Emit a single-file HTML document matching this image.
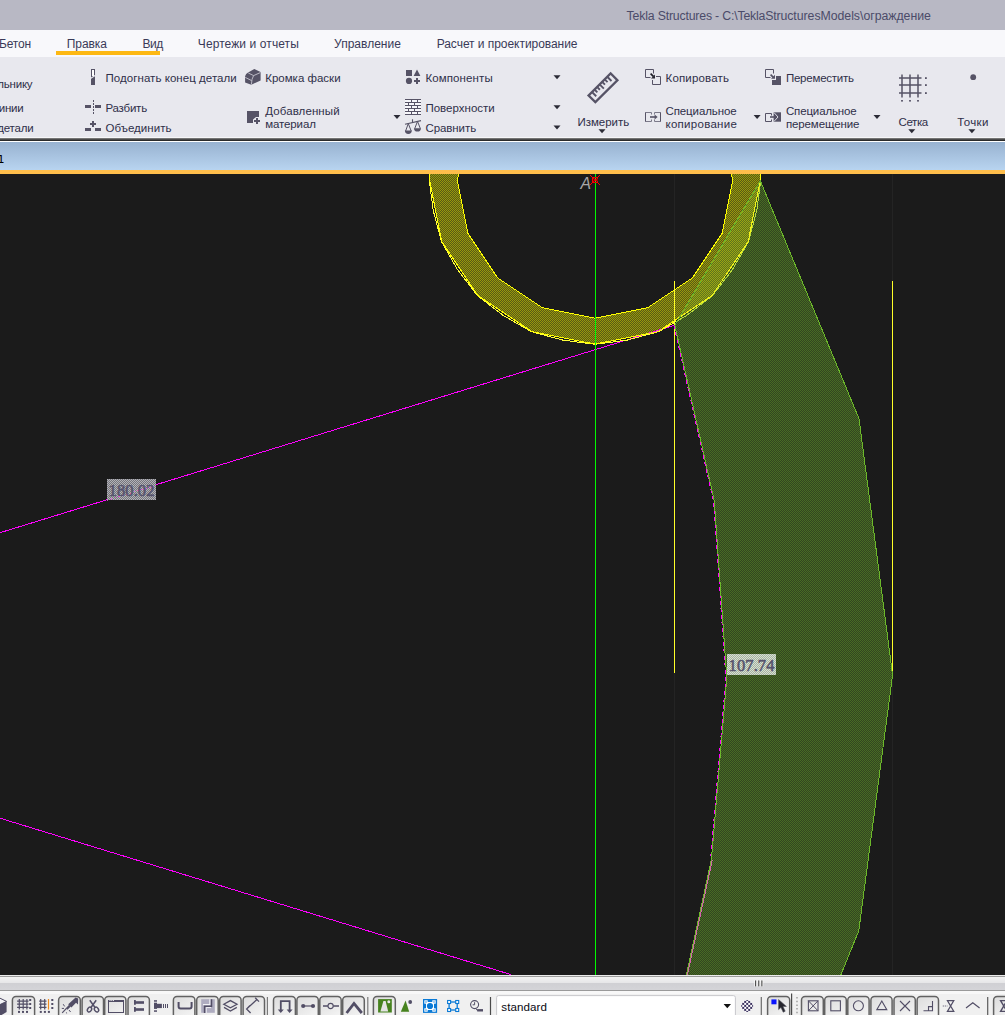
<!DOCTYPE html>
<html><head><meta charset="utf-8">
<style>
*{box-sizing:border-box;margin:0;padding:0}
html,body{width:1005px;height:1015px;overflow:hidden;background:#1b1b1b}
body{position:relative;font-family:"Liberation Sans",sans-serif;font-size:11.5px;color:#2f2f49}
.abs{position:absolute}
#title{left:0;top:0;width:1005px;height:30px;background:#b8b8c4}
#tabs{left:0;top:30px;width:1005px;height:27px;background:#f8f8fb}
#ribbon{left:0;top:57px;width:1005px;height:80px;background:#e8e8ee}
#sep1{left:0;top:137px;width:1005px;height:5px;background:linear-gradient(#f6f6f8 0,#f6f6f8 1px,#909090 1px,#5a5a5a 2px,#2a2a2a 3.5px,#2a2a2a 4px,#fff 4px,#fff 5px)}
#blue{left:0;top:142px;width:1005px;height:28px;background:linear-gradient(#98b2d0,#b8d4f0)}
#orange{left:0;top:170px;width:1005px;height:4px;background:#ffbe4b}
#canvas{left:0;top:174px;width:1005px;height:801px;background:#1b1b1b}
#sb{left:0;top:975px;width:1005px;height:16px;background:linear-gradient(#ececec 0,#ececec 6.25%,#9c9c9c 6.25%,#9c9c9c 12.5%,#f2f2f2 12.5%,#e6e6e8 50%,#d0d0d4 53%,#d4d4d8 93.75%,#9a9a9a 93.75%,#9a9a9a 100%)}
#tb{left:0;top:991px;width:1005px;height:24px;background:linear-gradient(#f8f8f8 0,#f8f8f8 2.5px,#f0f0f0 2.5px,#f0f0f0 100%)}
.t{position:absolute;white-space:nowrap;line-height:14px;height:14px}
</style></head><body>
<div id="title" class="abs"></div>
<div id="tabs" class="abs"></div>
<div id="ribbon" class="abs"></div>
<div id="sep1" class="abs"></div>
<div id="blue" class="abs"></div>
<div id="orange" class="abs"></div>
<div id="canvas" class="abs"></div>
<!--CANVAS-->
<svg class="abs" style="left:0;top:174px" width="1005" height="801" viewBox="0 174 1005 801" shape-rendering="crispEdges">
<defs>
<pattern id="py" width="2" height="2" patternUnits="userSpaceOnUse"><rect width="2" height="2" fill="#585a16"/><rect width="1" height="1" fill="#98980c"/><rect x="1" y="1" width="1" height="1" fill="#98980c"/></pattern>
<pattern id="pg" width="2" height="2" patternUnits="userSpaceOnUse"><rect width="2" height="2" fill="#324620"/><rect width="1" height="1" fill="#486a24"/><rect x="1" y="1" width="1" height="1" fill="#486a24"/></pattern>
<pattern id="po" width="2" height="2" patternUnits="userSpaceOnUse"><rect width="2" height="2" fill="#5c731e"/><rect width="1" height="1" fill="#9ba512"/><rect x="1" y="1" width="1" height="1" fill="#9ba512"/></pattern>
<pattern id="pl1" width="2" height="2" patternUnits="userSpaceOnUse"><rect width="2" height="2" fill="#76767c"/><rect width="1" height="1" fill="#b2b2b8"/><rect x="1" y="1" width="1" height="1" fill="#b2b2b8"/></pattern>
<pattern id="pl2" width="2" height="2" patternUnits="userSpaceOnUse"><rect width="2" height="2" fill="#a4b49e"/><rect width="1" height="1" fill="#d8ddd4"/><rect x="1" y="1" width="1" height="1" fill="#d8ddd4"/></pattern>
<clipPath id="cring"><path clip-rule="evenodd" d="M595.0,344.1 L531.6,331.5 L477.8,295.5 L441.8,241.7 L429.2,178.3 L441.8,114.9 L477.8,61.1 L531.6,25.1 L595.0,12.5 L658.4,25.1 L712.2,61.1 L748.2,114.9 L760.8,178.3 L748.2,241.7 L712.2,295.5 L658.4,331.5Z M595.0,318.2 L542.3,307.7 L497.6,277.9 L467.8,233.2 L457.3,180.5 L467.8,127.8 L497.6,83.1 L542.3,53.3 L595.0,42.8 L647.7,53.3 L692.4,83.1 L722.2,127.8 L732.7,180.5 L722.2,233.2 L692.4,277.9 L647.7,307.7Z"/></clipPath>
<clipPath id="cgreen"><path d="M760.3,180.8 L859.0,418.7 L892.6,675.0 L858.8,930.7 L840.4,976.0 L686.1,976.0 L711.4,859.6 L726.8,678.0 L714.3,501.0 L674.8,325.2Z"/></clipPath>
</defs>
<rect x="0" y="174" width="1005" height="801" fill="#1b1b1b"/>
<path d="M674.5,174 V281 M892.5,174 V281 M892.5,673 V975 M674.5,673 V975" stroke="#242424" stroke-width="1"/>
<path fill-rule="evenodd" d="M595.0,344.1 L531.6,331.5 L477.8,295.5 L441.8,241.7 L429.2,178.3 L441.8,114.9 L477.8,61.1 L531.6,25.1 L595.0,12.5 L658.4,25.1 L712.2,61.1 L748.2,114.9 L760.8,178.3 L748.2,241.7 L712.2,295.5 L658.4,331.5Z M595.0,318.2 L542.3,307.7 L497.6,277.9 L467.8,233.2 L457.3,180.5 L467.8,127.8 L497.6,83.1 L542.3,53.3 L595.0,42.8 L647.7,53.3 L692.4,83.1 L722.2,127.8 L732.7,180.5 L722.2,233.2 L692.4,277.9 L647.7,307.7Z" fill="url(#py)"/>
<path d="M-2,533.3 L674.8,325.2" fill="none" stroke="#ff00ff" stroke-width="1"/>
<path d="M760.3,180.8 L859.0,418.7 L892.6,675.0 L858.8,930.7 L840.4,976.0 L686.1,976.0 L711.4,859.6 L726.8,678.0 L714.3,501.0 L674.8,325.2Z" fill="url(#pg)"/>
<path d="M760.3,180.8 L859.0,418.7 L892.6,675.0 L858.8,930.7 L840.4,976.0 L686.1,976.0 L711.4,859.6 L726.8,678.0 L714.3,501.0 L674.8,325.2Z" fill="url(#po)" clip-path="url(#cring)"/>
<path d="M595.0,344.3 L562.8,340.1 L531.5,331.7 L503.3,315.5 L477.6,295.7 L457.8,270.0 L441.6,241.8 L433.2,210.5 L429.0,178.3 L433.2,146.1 L441.6,114.8 L457.8,86.6 L477.6,60.9 L503.3,41.1 L531.5,24.9 L562.8,16.5 L595.0,12.3 L627.2,16.5 L658.5,24.9 L686.7,41.1 L712.4,60.9 L732.2,86.6 L748.4,114.8 L756.8,146.1 L761.0,178.3 L756.8,210.5 L748.4,241.8 L732.2,270.0 L712.4,295.7 L686.7,315.5 L658.5,331.7 L627.2,340.1Z" fill="none" stroke="#ffff38" stroke-width="1"/>
<path d="M595.0,344.1 L531.6,331.5 L477.8,295.5 L441.8,241.7 L429.2,178.3 L441.8,114.9 L477.8,61.1 L531.6,25.1 L595.0,12.5 L658.4,25.1 L712.2,61.1 L748.2,114.9 L760.8,178.3 L748.2,241.7 L712.2,295.5 L658.4,331.5Z M595.0,318.2 L542.3,307.7 L497.6,277.9 L467.8,233.2 L457.3,180.5 L467.8,127.8 L497.6,83.1 L542.3,53.3 L595.0,42.8 L647.7,53.3 L692.4,83.1 L722.2,127.8 L732.7,180.5 L722.2,233.2 L692.4,277.9 L647.7,307.7Z" fill="none" stroke="#ffff00" stroke-width="1"/>
<g clip-path="url(#cgreen)"><path d="M595.0,344.3 L562.8,340.1 L531.5,331.7 L503.3,315.5 L477.6,295.7 L457.8,270.0 L441.6,241.8 L433.2,210.5 L429.0,178.3 L433.2,146.1 L441.6,114.8 L457.8,86.6 L477.6,60.9 L503.3,41.1 L531.5,24.9 L562.8,16.5 L595.0,12.3 L627.2,16.5 L658.5,24.9 L686.7,41.1 L712.4,60.9 L732.2,86.6 L748.4,114.8 L756.8,146.1 L761.0,178.3 L756.8,210.5 L748.4,241.8 L732.2,270.0 L712.4,295.7 L686.7,315.5 L658.5,331.7 L627.2,340.1Z" fill="none" stroke="#b8dc3a" stroke-width="1"/><path d="M595.0,344.1 L531.6,331.5 L477.8,295.5 L441.8,241.7 L429.2,178.3 L441.8,114.9 L477.8,61.1 L531.6,25.1 L595.0,12.5 L658.4,25.1 L712.2,61.1 L748.2,114.9 L760.8,178.3 L748.2,241.7 L712.2,295.5 L658.4,331.5Z M595.0,318.2 L542.3,307.7 L497.6,277.9 L467.8,233.2 L457.3,180.5 L467.8,127.8 L497.6,83.1 L542.3,53.3 L595.0,42.8 L647.7,53.3 L692.4,83.1 L722.2,127.8 L732.7,180.5 L722.2,233.2 L692.4,277.9 L647.7,307.7Z" fill="none" stroke="#f4f418" stroke-width="1"/></g>
<g clip-path="url(#cring)"><path d="M595,350.2 L674.8,325.6" fill="none" stroke="#ff70c8" stroke-width="1" stroke-dasharray="2 2"/></g>
<path d="M674.5,281 V673 M892.5,281 V673" stroke="#ffff28" stroke-width="1"/>
<path d="M673.9,325.2 L713.4,501 L725.9,678 L710.8,857" fill="none" stroke="#ff00ff" stroke-width="1" stroke-dasharray="4 3"/>
<path d="M712.4,859.6 L687.1,976" fill="none" stroke="#d860b0" stroke-width="1"/>
<path d="M760.3,180.8 L859.0,418.7 L892.6,675.0 L858.8,930.7 L840.4,976.0 L686.1,976.0 L711.4,859.6 L726.8,678.0 L714.3,501.0 L674.8,325.2Z" fill="none" stroke="#6cb82a" stroke-width="1"/>
<path d="M-2,817.6 L511,974.6" fill="none" stroke="#ff00ff" stroke-width="1"/>
<path d="M595.5,174 V975" stroke="#00f800" stroke-width="1"/>
<rect x="592" y="177" width="6" height="6" fill="#ff0000"/>
<path d="M590,175 L600,185 M600,175 L590,185" stroke="#ff0000" stroke-width="1"/>
<circle cx="595.5" cy="180" r="1.9" fill="none" stroke="#3a0a0a" stroke-width="0.9" shape-rendering="auto"/><rect x="595" y="178" width="1" height="1" fill="#30e030"/><rect x="595" y="181" width="1" height="1" fill="#30e030"/>
<text x="580.6" y="189.2" textLength="10.5" lengthAdjust="spacingAndGlyphs" font-family="Liberation Sans, sans-serif" font-style="italic" font-size="16.8" fill="#a8a8a8" shape-rendering="auto">A</text>
<rect x="107" y="479" width="49" height="21" fill="url(#pl1)"/>
<path d="M107,500.4 L156,485.3" stroke="#f050e8" stroke-width="1" stroke-dasharray="1.5 2.5" opacity="0.8"/>
<text x="131.6" y="496" text-anchor="middle" font-family="Liberation Serif, serif" font-size="16.5" letter-spacing="0.1" fill="#55526c" stroke="#55526c" stroke-width="0.55" shape-rendering="auto">180.02</text>
<rect x="727" y="654" width="49" height="21" fill="url(#pl2)"/>
<text x="751.6" y="671" text-anchor="middle" font-family="Liberation Serif, serif" font-size="16.5" letter-spacing="0.1" fill="#55526c" stroke="#55526c" stroke-width="0.55" shape-rendering="auto">107.74</text>
</svg>
<!--/CANVAS-->
<div id="sb" class="abs"></div>
<div id="tb" class="abs"></div>
<svg id="grip" class="abs" style="left:750px;top:977px" width="20" height="12" viewBox="750 977 20 12"><path d="M755.7,980 V986.6 M758.8,980 V986.6 M761.9,980 V986.6" stroke="#fff" stroke-width="2.6"/><path d="M755.7,980.4 V986.4 M758.8,980.4 V986.4 M761.9,980.4 V986.4" stroke="#2a2a2a" stroke-width="1"/></svg>
<!--RIBICONS-->
<svg class="abs" style="left:0;top:57px" width="1005" height="80" viewBox="0 57 1005 80">
<path d="M553.5,75.2 h7 l-3.5,4z" fill="#2b2b36"/>
<path d="M553.5,105.2 h7 l-3.5,4z" fill="#2b2b36"/>
<path d="M553.5,125.5 h7 l-3.5,4z" fill="#2b2b36"/>
<path d="M393.5,115 h7 l-3.5,4z" fill="#2b2b36"/>
<path d="M753.6,115 h7 l-3.5,4z" fill="#2b2b36"/>
<path d="M873.5,115 h7 l-3.5,4z" fill="#2b2b36"/>
<path d="M598.5,129.3 h7 l-3.5,4z" fill="#2b2b36"/>
<path d="M908.3,129.3 h7 l-3.5,4z" fill="#2b2b36"/>
<path d="M968.4,129.3 h7 l-3.5,4z" fill="#2b2b36"/>
<rect x="91.5" y="69.5" width="3" height="7" fill="#fff" stroke="#565366" stroke-width="1"/><rect x="91" y="77" width="4" height="8" fill="#565366"/><path d="M90.5,78.5 L95.5,75.2" stroke="#e8e8ee" stroke-width="1.1"/>
<rect x="85" y="105" width="6" height="3" fill="#565366"/><rect x="95" y="105" width="6" height="3" fill="#565366"/><path d="M93.5,100 V114" stroke="#565366" stroke-width="1" stroke-dasharray="2 1"/>
<rect x="85" y="128" width="6" height="3" fill="#565366"/><rect x="95" y="128" width="6" height="3" fill="#565366"/><rect x="90" y="123" width="6" height="2" fill="#565366"/><rect x="92" y="121" width="2" height="6" fill="#565366"/>
<path d="M254.3,69 L260.6,72.1 L260.6,80.5 L251.3,84.7 L245.1,82.6 L245.1,76.3 Q245.6,73.6 248.1,72.4 Z" fill="#565366"/><path d="M248.3,73 L253.6,75.6 L260.3,72.6 M253.6,75.6 Q251.6,78.5 251.4,84.5 M245.3,77.4 L251.6,80.6" fill="none" stroke="#d4d3dc" stroke-width="0.8"/>
<path d="M247,111 H259 V117 H256 L253,119.5 V123 H247Z" fill="#565366"/><rect x="254" y="120" width="6" height="2" fill="#565366"/><rect x="256" y="118" width="2" height="6" fill="#565366"/>
<rect x="406" y="70" width="6" height="6" fill="#565366"/><path d="M417,69.6 L420.4,76 H413.6Z" fill="#565366"/><circle cx="409" cy="80.9" r="3.1" fill="#565366"/><rect x="414" y="80" width="6" height="2" fill="#565366"/><rect x="416" y="78" width="2" height="6" fill="#565366"/>
<rect x="405" y="99" width="16" height="16" fill="#f6f6fa"/><path d="M405,99.5 H421 M405,102.5 H421 M405,105.5 H421 M405,108.5 H421 M405,111.5 H421 M405,114.5 H421 M411.5,99.5 v3 M417.5,99.5 v3 M411.5,105.5 v3 M417.5,105.5 v3 M411.5,111.5 v3 M417.5,111.5 v3 M408.5,102.5 v3 M414.5,102.5 v3 M408.5,108.5 v3 M414.5,108.5 v3 " stroke="#565366" stroke-width="1" fill="none"/>
<path d="M405,124.3 L421,120.6 M412.5,119.2 V122.6" stroke="#565366" stroke-width="1.1" fill="none"/><path d="M408.3,123.6 L405.6,131 M408.3,123.6 L411.2,131 M417.5,121.4 L414.7,128.6 M417.5,121.4 L420.4,128.6" stroke="#565366" stroke-width="1" fill="none"/><path d="M404.9,130.6 H411.8 A3.45,3.4 0 0 1 404.9,130.6Z M414,128.2 H420.9 A3.45,3.4 0 0 1 414,128.2Z" fill="#565366"/>
<g transform="translate(603,87.8) rotate(-45)"><rect x="-15.6" y="-4.8" width="31.2" height="9.6" fill="none" stroke="#565366" stroke-width="2.3"/><path d="M-10.8,-4.8 V1.2" stroke="#565366" stroke-width="1.9"/><path d="M-7.2,-4.8 V-0.8" stroke="#565366" stroke-width="1.9"/><path d="M-3.6,-4.8 V-0.8" stroke="#565366" stroke-width="1.9"/><path d="M0.0,-4.8 V1.2" stroke="#565366" stroke-width="1.9"/><path d="M3.6,-4.8 V-0.8" stroke="#565366" stroke-width="1.9"/><path d="M7.2,-4.8 V-0.8" stroke="#565366" stroke-width="1.9"/><path d="M10.8,-4.8 V1.2" stroke="#565366" stroke-width="1.9"/></g>
<path d="M650.5,77.5 H645.5 V69.5 H653.5 V73.5 M652.5,80 V84.5 H660.5 V76.5 H656" fill="none" stroke="#565366" stroke-width="1"/><path d="M650.6,73.6 L653.6,76.6" stroke="#1d1d26" stroke-width="1.6"/><path d="M655,78.6 V74.6 L651,78.6Z" fill="#2a2a34"/>
<path d="M770.5,77.5 H765.5 V69.5 H773.5 V73.5" fill="none" stroke="#565366" stroke-width="1"/><path d="M776,76 H781 V85 H772 V80 H776Z" fill="#565366"/><path d="M770.6,74.6 L773.6,77.6" stroke="#565366" stroke-width="1.6"/><path d="M775,78.8 V74.8 L771,78.8Z" fill="#565366"/>
<path d="M651.5,114.5 V112.5 H645.5 V121.5 H651.5 V119.5 M654.5,114.5 V112.5 H660.5 V121.5 H654.5 V119.5" fill="none" stroke="#7c7a8a" stroke-width="1"/><path d="M645.5,112.5 V121.5 M660.5,112.5 V121.5" stroke="#565366" stroke-width="1"/><path d="M650,117 H655" stroke="#565366" stroke-width="1.6"/><path d="M654.6,114.4 L657.6,117 L654.6,119.6Z" fill="#565366"/>
<path d="M771.5,115.5 V113.5 H765.5 V121.5 H771.5 V119.5" fill="none" stroke="#565366" stroke-width="1"/><rect x="773.6" y="112.3" width="7.4" height="9.4" fill="#565366"/><path d="M774,112.6 L778,117 L774,121.4" fill="none" stroke="#dcdce4" stroke-width="1"/><path d="M770,117 H775" stroke="#565366" stroke-width="1.6"/><path d="M774,114 L777,117 L774,120Z" fill="#565366"/>
<path d="M902,74.5 V97.5 M910,74.5 V97.5 M918,74.5 V97.5 M899,78 H921.5 M899,85 H921.5 M899,93 H921.5" stroke="#565366" stroke-width="1.5" fill="none"/><rect x="925" y="77.2" width="1.8" height="1.8" fill="#565366"/><rect x="925" y="84.2" width="1.8" height="1.8" fill="#565366"/><rect x="925" y="92.2" width="1.8" height="1.8" fill="#565366"/><rect x="901.1" y="100" width="1.8" height="1.6" fill="#565366"/><rect x="909.1" y="100" width="1.8" height="1.6" fill="#565366"/><rect x="917.1" y="100" width="1.8" height="1.6" fill="#565366"/>
<circle cx="973.2" cy="77.2" r="2.9" fill="#565366"/>
</svg>
<!--/RIBICONS-->
<div id="ul" class="abs" style="left:56px;top:51px;width:104px;height:4px;background:#fdb813"></div>
<div id="v1" class="abs" style="right:1000.4px;top:153px;font-family:'DejaVu Sans',sans-serif;font-size:11px;line-height:14px;color:#000;white-space:nowrap">View 1</div>
<!--TEXT-->
<div class="t" style="left:626.6px;top:8.74px;letter-spacing:-0.181px;font-size:12.3px;color:#4b4b69">Tekla Structures - C:\TeklaStr</div>
<div class="t" style="left:780.4px;top:8.74px;letter-spacing:-0.028px;font-size:12.3px;color:#4b4b69">ucturesModels\</div>
<div class="t" style="left:863.4px;top:8.74px;letter-spacing:-0.035px;font-size:12.3px;color:#4b4b69">ограждение</div>
<div class="t" style="left:-1.0px;top:36.84px;letter-spacing:-0.202px;font-size:12px;color:#3a3a58">Бетон</div>
<div class="t" style="left:66.7px;top:36.84px;letter-spacing:-0.041px;font-size:12px;color:#3a3a58">Правка</div>
<div class="t" style="left:142.5px;top:36.84px;letter-spacing:-0.473px;font-size:12px;color:#3a3a58">Вид</div>
<div class="t" style="left:197.8px;top:36.84px;letter-spacing:0.091px;font-size:12px;color:#3a3a58">Чертежи и отчеты</div>
<div class="t" style="left:334.1px;top:36.84px;letter-spacing:0.008px;font-size:12px;color:#3a3a58">Управление</div>
<div class="t" style="left:436.7px;top:36.84px;letter-spacing:-0.049px;font-size:12px;color:#3a3a58">Расчет и проектирование</div>
<div class="t" style="left:105.5px;top:71.02px;letter-spacing:0.053px">Подогнать конец детали</div>
<div class="t" style="left:265.2px;top:71.02px;letter-spacing:0.005px">Кромка фаски</div>
<div class="t" style="left:425.4px;top:71.02px;letter-spacing:0.113px">Компоненты</div>
<div class="t" style="left:665.5px;top:71.02px;letter-spacing:0.178px">Копировать</div>
<div class="t" style="left:785.9px;top:71.02px;letter-spacing:-0.224px">Переместить</div>
<div class="t" style="left:105.5px;top:101.02px;letter-spacing:-0.224px">Разбить</div>
<div class="t" style="left:425.4px;top:101.02px;letter-spacing:0.014px">Поверхности</div>
<div class="t" style="left:105.5px;top:121.02px;letter-spacing:0.034px">Объединить</div>
<div class="t" style="left:425.4px;top:121.02px;letter-spacing:-0.069px">Сравнить</div>
<div class="t" style="left:265.2px;top:104.02px;letter-spacing:0.102px">Добавленный</div>
<div class="t" style="left:265.2px;top:117.02px;letter-spacing:-0.114px">материал</div>
<div class="t" style="left:665.5px;top:104.02px;letter-spacing:-0.108px">Специальное</div>
<div class="t" style="left:665.5px;top:117.02px;letter-spacing:0.278px">копирование</div>
<div class="t" style="left:785.9px;top:104.02px;letter-spacing:-0.135px">Специальное</div>
<div class="t" style="left:785.9px;top:117.02px;letter-spacing:-0.111px">перемещение</div>
<div class="t" style="left:577.5px;top:115.02px;letter-spacing:-0.040px">Измерить</div>
<div class="t" style="left:898.5px;top:115.02px;letter-spacing:-0.393px">Сетка</div>
<div class="t" style="left:957.2px;top:115.02px;letter-spacing:0.356px">Точки</div>
<div class="t" style="right:972.6px;top:77.02px;letter-spacing:-0.2px">прямоугольнику</div>
<div class="t" style="right:981.5px;top:101.02px;letter-spacing:-0.2px">линии</div>
<div class="t" style="right:971.6px;top:121.02px;letter-spacing:-0.2px">детали</div>
<!--/TEXT-->
<!--TB-->
<svg class="abs" style="left:0;top:991px" width="1005" height="24" viewBox="0 991 1005 24">
<defs><linearGradient id="bg" x1="0" y1="0" x2="0.6" y2="1"><stop offset="0" stop-color="#dcdcdc"/><stop offset="1" stop-color="#f4f4f4"/></linearGradient>
<pattern id="ck" x="0.2" y="0.9" width="4" height="4" patternUnits="userSpaceOnUse"><rect width="4" height="4" fill="#fff"/><rect width="2" height="2" fill="#3c3260"/><rect x="2" y="2" width="2" height="2" fill="#3c3260"/></pattern></defs>
<rect x="12.4" y="996.6" width="22.2" height="24" rx="3.6" fill="url(#bg)" stroke="#626262" stroke-width="1.5"/>
<rect x="58.6" y="996.6" width="21.7" height="24" rx="3.6" fill="url(#bg)" stroke="#626262" stroke-width="1.5"/>
<rect x="82.1" y="996.6" width="21.4" height="24" rx="3.6" fill="url(#bg)" stroke="#626262" stroke-width="1.5"/>
<rect x="104.7" y="996.6" width="21.2" height="24" rx="3.6" fill="url(#bg)" stroke="#626262" stroke-width="1.5"/>
<rect x="128.0" y="996.6" width="21.4" height="24" rx="3.6" fill="url(#bg)" stroke="#626262" stroke-width="1.5"/>
<rect x="173.4" y="996.6" width="21.5" height="24" rx="3.6" fill="url(#bg)" stroke="#626262" stroke-width="1.5"/>
<rect x="196.7" y="996.6" width="21.5" height="24" rx="3.6" fill="url(#bg)" stroke="#626262" stroke-width="1.5"/>
<rect x="219.7" y="996.6" width="21.4" height="24" rx="3.6" fill="url(#bg)" stroke="#626262" stroke-width="1.5"/>
<rect x="243.1" y="996.6" width="21.4" height="24" rx="3.6" fill="url(#bg)" stroke="#626262" stroke-width="1.5"/>
<rect x="273.5" y="996.6" width="21.9" height="24" rx="3.6" fill="url(#bg)" stroke="#626262" stroke-width="1.5"/>
<rect x="296.9" y="996.6" width="21.4" height="24" rx="3.6" fill="url(#bg)" stroke="#626262" stroke-width="1.5"/>
<rect x="319.8" y="996.6" width="21.4" height="24" rx="3.6" fill="url(#bg)" stroke="#626262" stroke-width="1.5"/>
<rect x="342.7" y="996.6" width="21.6" height="24" rx="3.6" fill="url(#bg)" stroke="#626262" stroke-width="1.5"/>
<rect x="373.4" y="996.6" width="21.9" height="24" rx="3.6" fill="url(#bg)" stroke="#626262" stroke-width="1.5"/>
<rect x="767.6" y="996.6" width="22.1" height="24" rx="3.6" fill="url(#bg)" stroke="#626262" stroke-width="1.5"/>
<rect x="801.5" y="996.6" width="21.8" height="24" rx="3.6" fill="url(#bg)" stroke="#626262" stroke-width="1.5"/>
<rect x="824.7" y="996.6" width="21.6" height="24" rx="3.6" fill="url(#bg)" stroke="#626262" stroke-width="1.5"/>
<rect x="847.8" y="996.6" width="21.3" height="24" rx="3.6" fill="url(#bg)" stroke="#626262" stroke-width="1.5"/>
<rect x="870.9" y="996.6" width="21.2" height="24" rx="3.6" fill="url(#bg)" stroke="#626262" stroke-width="1.5"/>
<rect x="894.0" y="996.6" width="21.3" height="24" rx="3.6" fill="url(#bg)" stroke="#626262" stroke-width="1.5"/>
<rect x="917.1" y="996.6" width="21.4" height="24" rx="3.6" fill="url(#bg)" stroke="#626262" stroke-width="1.5"/>
<rect x="993.6" y="996.6" width="22.3" height="24" rx="3.6" fill="url(#bg)" stroke="#626262" stroke-width="1.5"/>
<path d="M267.4,997 V1016" stroke="#7a7a7a" stroke-width="1.2"/>
<path d="M367.8,997 V1016" stroke="#7a7a7a" stroke-width="1.2"/>
<path d="M490.5,997 V1016" stroke="#4a4a4a" stroke-width="1.2"/>
<path d="M761.3,997 V1016" stroke="#6a6a6a" stroke-width="1.2"/>
<path d="M791.6,993.5 V1016" stroke="#4a4a4a" stroke-width="1.2"/>
<path d="M987.7,997 V1016" stroke="#5a5a5a" stroke-width="1.2"/>
<path d="M797,997 V1016" stroke="#9a9a9a" stroke-width="1.4" stroke-dasharray="1.5 2.2"/>
<path d="M0,998.2 L6.6,1001.4 V1012 L0,1016Z" fill="#524e66"/><path d="M0,998.2 L6.6,1001.4 L0,1004.6" fill="#f4f4f8" stroke="#524e66" stroke-width="1"/>
<path d="M19.3,998.9 V1009.6 M23.2,998.9 V1009.6 M26.9,998.9 V1009.6 M17.1,1001.1 H28.5 M17.1,1004.2 H28.5 M17.1,1007.3 H28.5 " stroke="#524e66" stroke-width="1.2" fill="none"/><rect x="29.2" y="999" width="2" height="2" fill="#524e66"/><rect x="29.2" y="1003" width="2" height="2" fill="#524e66"/><rect x="29.2" y="1007" width="2" height="2" fill="#524e66"/><rect x="18" y="1010.9" width="2" height="2" fill="#524e66"/><rect x="22" y="1010.9" width="2" height="2" fill="#524e66"/><rect x="26" y="1010.9" width="2" height="2" fill="#524e66"/>
<path d="M40.7,998.9 V1009.6 M44.7,998.9 V1009.6 M39.2,1001.1 H46.5 M39.2,1004.2 H46.5 M39.2,1007.3 H46.5 " stroke="#524e66" stroke-width="1.2" fill="none"/><rect x="51.3" y="999" width="2" height="2" fill="#524e66"/><rect x="51.3" y="1003" width="2" height="2" fill="#524e66"/><rect x="51.3" y="1007" width="2" height="2" fill="#524e66"/><rect x="39.8" y="1010.9" width="2" height="2" fill="#524e66"/><rect x="43.9" y="1010.9" width="2" height="2" fill="#524e66"/><rect x="47.9" y="1010.9" width="2" height="2" fill="#524e66"/><path d="M48.5,999 V1009.6" stroke="#f08a1c" stroke-width="1.2"/>
<path d="M75.6,997.4 L78.2,998.4 L78,1004.6 L76,1002.8 L71.4,1007.4 L68.2,1004.2 Z" fill="#524e66"/><path d="M70,1005.6 L66.6,1009" stroke="#524e66" stroke-width="2.4"/><path d="M66.4,1008.4 L62.2,1012.8" stroke="#524e66" stroke-width="1.2"/><path d="M63.2,1004.2 L64.6,1006.4 M61.8,1008.4 L64,1008.4 M69,1010 L70.6,1012 M66.4,1012.4 L66.6,1013.4" stroke="#524e66" stroke-width="1"/>
<path d="M89.8,1000.2 L95.4,1008 M96.2,1000.2 L90.6,1008" stroke="#524e66" stroke-width="1.5" fill="none"/><ellipse cx="89.5" cy="1009.6" rx="1.9" ry="2.6" transform="rotate(35 89.5 1009.6)" fill="none" stroke="#524e66" stroke-width="1.4"/><ellipse cx="96.5" cy="1009.6" rx="1.9" ry="2.6" transform="rotate(-35 96.5 1009.6)" fill="none" stroke="#524e66" stroke-width="1.4"/>
<rect x="108.5" y="1000.5" width="15" height="12" fill="none" stroke="#524e66" stroke-width="1" shape-rendering="crispEdges"/><rect x="108" y="1000" width="16" height="2" fill="#524e66" shape-rendering="crispEdges"/><path d="M109.5,1000.5 H114" stroke="#f0f0f0" stroke-width="1" stroke-dasharray="1 0.8"/>
<rect x="134" y="1000" width="1.8" height="4.8" fill="#524e66"/><rect x="135" y="1001.2" width="9" height="2.6" fill="#524e66"/><rect x="134" y="1007" width="1.8" height="4.8" fill="#524e66"/><rect x="135" y="1008.2" width="9" height="2.6" fill="#524e66"/>
<rect x="154" y="1000.2" width="3" height="1.5" fill="#524e66"/><rect x="154" y="1010.3" width="3" height="1.5" fill="#524e66"/><rect x="154" y="1002.7" width="3" height="6.2" fill="#524e66"/><rect x="156.5" y="1003.8" width="5.4" height="4.3" fill="#524e66"/><path d="M163.5,1004 V1008 M165.5,1004 V1008 M167.5,1004 V1008" stroke="#524e66" stroke-width="1"/>
<path d="M178.6,1002 V1006.6 Q178.6,1008.6 180.6,1008.6 H189.6 Q191.6,1008.6 191.6,1006.6 V1002" fill="none" stroke="#524e66" stroke-width="2"/>
<rect x="201.2" y="999.2" width="13.6" height="13.6" fill="#aeacc0"/><path d="M209.9,999.2 V1004.6 H203 " fill="none" stroke="#f2f2f6" stroke-width="1.2"/><path d="M206.2,1013 V1007.6 H211" fill="none" stroke="#f2f2f6" stroke-width="1"/><path d="M211.5,999.2 V1006.2 H204.6 V1013" fill="none" stroke="#524e66" stroke-width="1.5"/>
<path d="M223.8,1004.2 L230.4,1000.6 L237,1004.2 L230.4,1007.8Z M224,1007.4 L230.4,1011 L236.8,1007.4" fill="none" stroke="#524e66" stroke-width="1.3"/>
<path d="M246.6,1009 L257,999.4 M255.2,997.8 L259,1001.6 M250,1005.4 L246.6,1009 L250.6,1013" fill="none" stroke="#524e66" stroke-width="1.3"/>
<path d="M280.8,1011 V1001.2 H289.6 V1011" fill="none" stroke="#524e66" stroke-width="1.8"/><path d="M277.8,1009.6 H283.8 L280.8,1013Z M286.6,1009.6 H292.6 L289.6,1013Z" fill="#524e66"/>
<circle cx="303.2" cy="1006" r="2.1" fill="#524e66"/><circle cx="313" cy="1006" r="2.1" fill="#524e66"/><path d="M303,1006 H313" stroke="#524e66" stroke-width="1.2"/>
<circle cx="330.6" cy="1006" r="2.6" fill="none" stroke="#524e66" stroke-width="1.1"/><path d="M323,1006 H328 M333.2,1006 H339" stroke="#524e66" stroke-width="1.4"/>
<path d="M346.6,1013 L354,1003.4 L361.8,1013" fill="none" stroke="#524e66" stroke-width="2.8"/>
<rect x="378.1" y="999.1" width="13.7" height="13.4" fill="#46821e"/><path d="M383.4,1001 H385.6 L388.2,1011.4 H380.4Z" fill="#e4e4e4"/><circle cx="388.8" cy="1001.8" r="1.5" fill="#e8e8e8"/>
<path d="M405.6,1000.4 L409.2,1011.8 H400.8Z" fill="#46821e"/><circle cx="410.2" cy="1002" r="1.9" fill="#524e66"/>
<rect x="423" y="999" width="14.1" height="13.9" fill="#0a7ad6"/><rect x="426" y="1002" width="8" height="8" fill="#fff"/><circle cx="430" cy="1006" r="3.1" fill="#0a7ad6"/><rect x="424.3" y="1000.3" width="3.4" height="3.4" fill="#fff"/><rect x="425.4" y="1001.4" width="1.2" height="1.2" fill="#0a7ad6"/><rect x="424.3" y="1008.3" width="3.4" height="3.4" fill="#fff"/><rect x="425.4" y="1009.4" width="1.2" height="1.2" fill="#0a7ad6"/><rect x="432.3" y="1000.3" width="3.4" height="3.4" fill="#fff"/><rect x="433.4" y="1001.4" width="1.2" height="1.2" fill="#0a7ad6"/><rect x="432.3" y="1008.3" width="3.4" height="3.4" fill="#fff"/><rect x="433.4" y="1009.4" width="1.2" height="1.2" fill="#0a7ad6"/>
<rect x="449.1" y="1002" width="8.1" height="8" fill="none" stroke="#0a7ad6" stroke-width="1.3"/><rect x="447.6" y="1000.5" width="3" height="3" fill="#fff" stroke="#0a7ad6" stroke-width="1.1"/><rect x="447.6" y="1008.5" width="3" height="3" fill="#fff" stroke="#0a7ad6" stroke-width="1.1"/><rect x="455.7" y="1000.5" width="3" height="3" fill="#fff" stroke="#0a7ad6" stroke-width="1.1"/><rect x="455.7" y="1008.5" width="3" height="3" fill="#fff" stroke="#0a7ad6" stroke-width="1.1"/>
<circle cx="474.6" cy="1004.6" r="4" fill="none" stroke="#524e66" stroke-width="1.1"/><path d="M474.6,1002.2 V1004.8 H472.6" fill="none" stroke="#524e66" stroke-width="1"/><path d="M475.8,1008.4 Q476.4,1010.3 478,1010.3" fill="none" stroke="#524e66" stroke-width="1"/><rect x="477.2" y="1009.1" width="5.8" height="2.4" fill="#524e66"/>
<rect x="496.6" y="995.6" width="238.8" height="24" rx="2" fill="#fff" stroke="#c8c8cc" stroke-width="1"/><path d="M723.6,1004 H731 L727.3,1008.2Z" fill="#111"/>
<text x="501.3" y="1011" font-family="Liberation Sans, sans-serif" font-size="11.6" fill="#0a0a14" textLength="45.6" lengthAdjust="spacing">standard</text>
<circle cx="747.2" cy="1005.9" r="6" fill="url(#ck)"/>
<rect x="771.4" y="999.4" width="5.1" height="4.9" fill="#0a14ff"/><path d="M778.6,999.6 L778.6,1009.6 L781,1007.4 L783.2,1012.2 L785.2,1011.2 L783,1006.6 L786.4,1006.4Z" fill="#26262e" stroke="#55555f" stroke-width="0.6"/>
<rect x="808.4" y="1000.8" width="9.6" height="10" fill="none" stroke="#524e66" stroke-width="1.1"/><path d="M808.4,1000.8 L818,1010.8 M818,1000.8 L808.4,1010.8" stroke="#524e66" stroke-width="1"/>
<rect x="830.8" y="1000.8" width="9.6" height="10" fill="none" stroke="#524e66" stroke-width="1.1"/>
<circle cx="858.4" cy="1005.8" r="5" fill="none" stroke="#524e66" stroke-width="1.1"/>
<path d="M881.8,1001 L886.8,1009.6 H876.8Z" fill="none" stroke="#524e66" stroke-width="1.1"/>
<path d="M900,1001 L910,1011 M910,1001 L900,1011" stroke="#524e66" stroke-width="1.1"/>
<path d="M923.5,1010.7 H932.5 V1001 M928.5,1010.7 V1006.6 H932.5" fill="none" stroke="#524e66" stroke-width="1.1"/>
<path d="M947.4,1000.6 H953.8 L947.4,1011.4 H953.8 Z" fill="none" stroke="#524e66" stroke-width="1.2"/><path d="M942.8,1006 H947.4" stroke="#524e66" stroke-width="1" stroke-dasharray="1 1"/>
<path d="M966,1008 L972.8,1002.8 L979.6,1008" fill="none" stroke="#524e66" stroke-width="1.2"/>
<path d="M1000.6,1000.6 H1007 L1000.6,1011.4 H1007 Z" fill="none" stroke="#524e66" stroke-width="1.4"/>
</svg>
<!--/TB-->
</body></html>
